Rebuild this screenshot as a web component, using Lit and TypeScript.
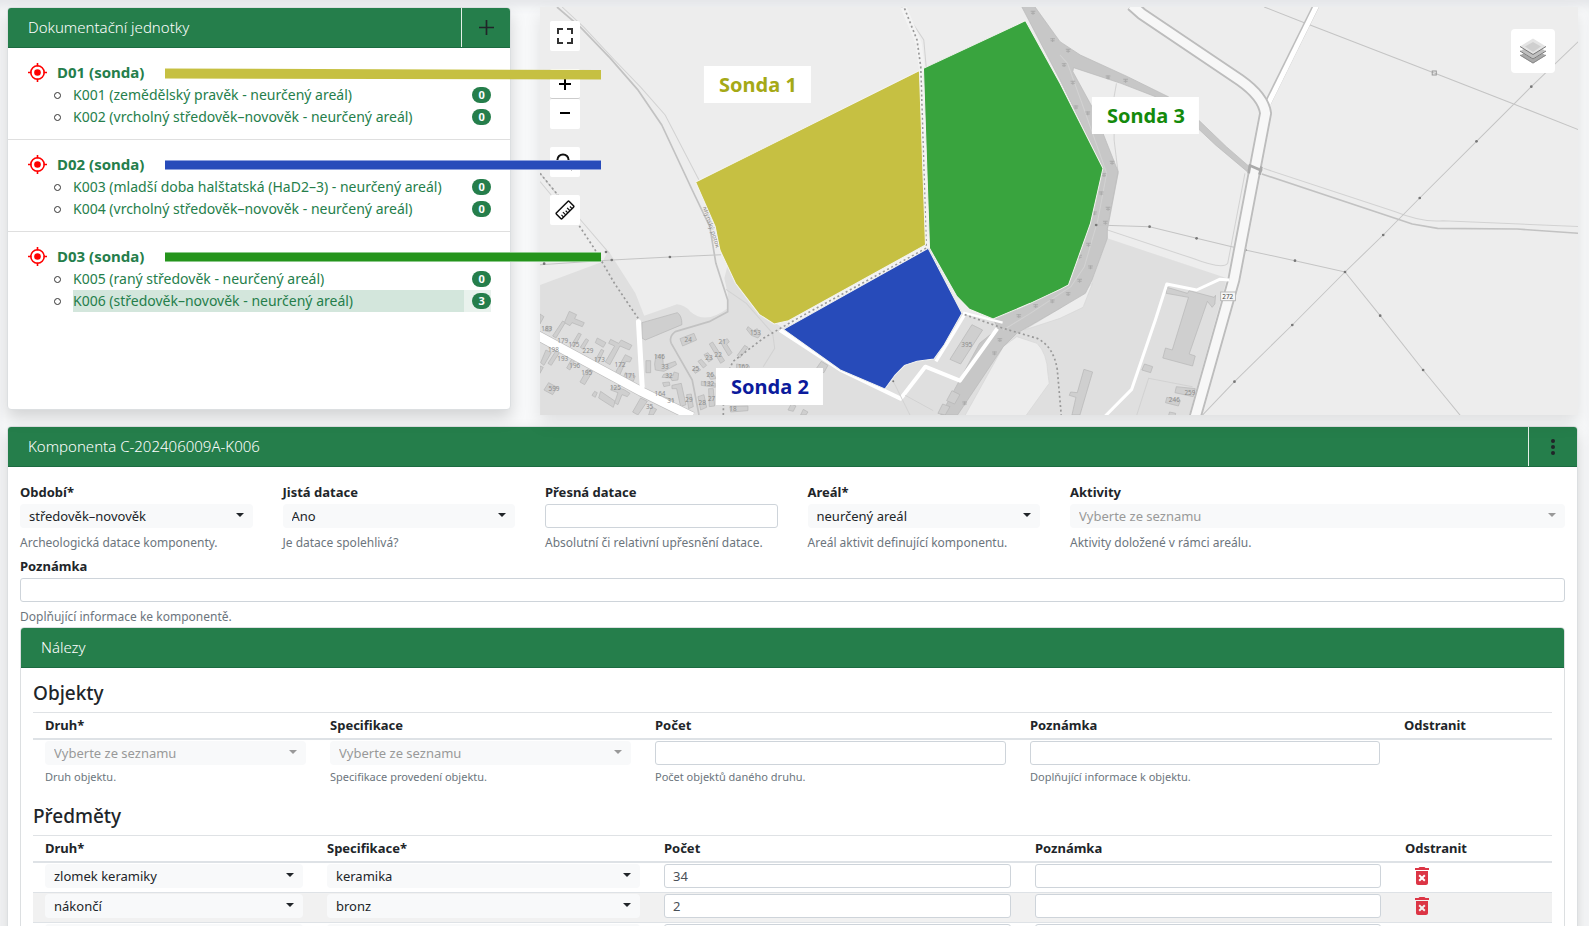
import { LitElement, html, svg, css, nothing } from "lit";
import { customElement, property } from "lit/decorators.js";
import { classMap } from "lit/directives/class-map.js";

const fontFamily = css`"Noto Sans", "Open Sans", sans-serif`;

interface Component {
  label: string;
  count: number;
  active?: boolean;
}

interface Unit {
  label: string;
  components: Component[];
}

const UNITS: Unit[] = [
  {
    label: "D01 (sonda)",
    components: [
      { label: "K001 (zemědělský pravěk - neurčený areál)", count: 0 },
      { label: "K002 (vrcholný středověk–novověk - neurčený areál)", count: 0 },
    ],
  },
  {
    label: "D02 (sonda)",
    components: [
      { label: "K003 (mladší doba halštatská (HaD2–3) - neurčený areál)", count: 0 },
      { label: "K004 (vrcholný středověk–novověk - neurčený areál)", count: 0 },
    ],
  },
  {
    label: "D03 (sonda)",
    components: [
      { label: "K005 (raný středověk - neurčený areál)", count: 0 },
      { label: "K006 (středověk–novověk - neurčený areál)", count: 3, active: true },
    ],
  },
];

interface Field {
  id: string;
  label: string;
  help: string;
  kind: "select" | "input";
  value?: string;
  span?: "wide" | "full";
}

const FIELDS: Field[] = [
  { id: "obdobi", label: "Období*", help: "Archeologická datace komponenty.", kind: "select", value: "středověk–novověk" },
  { id: "jista", label: "Jistá datace", help: "Je datace spolehlivá?", kind: "select", value: "Ano" },
  { id: "presna", label: "Přesná datace", help: "Absolutní či relativní upřesnění datace.", kind: "input" },
  { id: "areal", label: "Areál*", help: "Areál aktivit definující komponentu.", kind: "select", value: "neurčený areál" },
  { id: "aktivity", label: "Aktivity", help: "Aktivity doložené v rámci areálu.", kind: "select", span: "wide" },
  { id: "poznamka", label: "Poznámka", help: "Doplňující informace ke komponentě.", kind: "input", span: "full" },
];

const PLACEHOLDER = "Vyberte ze seznamu";

const controlStyles = css`
  * {
    box-sizing: border-box;
  }
  .select {
    position: relative;
    display: block;
  }
  .select::after {
    content: "";
    position: absolute;
    right: 9px;
    top: 9px;
    border: 4px solid transparent;
    border-top-color: #212529;
    border-bottom-width: 0;
    pointer-events: none;
  }
  .select.empty::after {
    border-top-color: #999;
  }
  .select select {
    appearance: none;
    display: block;
    width: 100%;
    height: 24px;
    padding: 0 24px 0 9px;
    border: 0;
    border-radius: 4px;
    background: #f8f9fa;
    color: #212529;
    font: 400 13px/24px ${fontFamily};
  }
  .select.empty select {
    color: #999;
  }
  .text {
    display: block;
    width: 100%;
    height: 24px;
    padding: 0 8px;
    border: 1px solid #ced4da;
    border-radius: 3px;
    background: #fff;
    color: #495057;
    font: 400 13px/22px ${fontFamily};
  }
`;

const dropdown = (value: string | undefined, id: string, labelledBy?: string) => html`
  <span class=${classMap({ select: true, empty: value === undefined })}>
    <select id=${id} aria-labelledby=${labelledBy ?? nothing}>
      <option selected>${value ?? PLACEHOLDER}</option>
    </select>
  </span>
`;

/** Grey base map with the three trench polygons. */
@customElement("site-map")
export class SiteMap extends LitElement {
  static styles = css`
    * {
      box-sizing: border-box;
    }
    :host {
      position: relative;
      display: block;
      height: 408px;
      overflow: hidden;
      background: #ededed;
      box-shadow: 0 8px 16px rgba(0, 0, 0, 0.1);
    }
    .canvas {
      display: block;
      width: 100%;
      height: 100%;
    }
    .tools {
      position: absolute;
      left: 10px;
      top: 14px;
      display: flex;
      flex-direction: column;
      gap: 18px;
    }
    .zoom {
      display: flex;
      flex-direction: column;
    }
    button {
      display: grid;
      place-items: center;
      width: 30px;
      height: 30px;
      padding: 0;
      border: 0;
      border-radius: 2px;
      background: #fff;
    }
    .zoom button:first-child {
      border-bottom: 1px solid #ccc;
    }
    .layers {
      position: absolute;
      right: 23px;
      top: 22px;
      width: 44px;
      height: 44px;
      border-radius: 4px;
    }
    .residential { fill: #dfdfdf; }
    .meadow { fill: #ededed; stroke: #d6d6d6; stroke-width: 2; }
    .forest { fill: #c7c7c7; stroke: #b9b9b9; stroke-width: 2; }
    .building { fill: #cfcfcf; stroke: #b5b5b5; stroke-width: 2; }
    .court { fill: #c9c9c9; }
    .street { fill: none; stroke: #fff; stroke-linejoin: round; }
    .casing { fill: none; stroke: #bdbdbd; stroke-linejoin: round; }
    .power { fill: none; stroke: #c4c4c4; stroke-width: 3; }
    .pole { fill: #777; }
    .track { fill: none; stroke: #999; stroke-width: 5; stroke-dasharray: 6 8; }
    .halo { fill: none; stroke: #f3f3f3; stroke-width: 18; stroke-linejoin: round; }
    .thin { fill: none; stroke: #d2d2d2; stroke-width: 3; }
    .stream { fill: none; stroke: #c2c2c2; stroke-width: 5; stroke-linejoin: round; }
    .tree { fill: none; stroke: #aaa; stroke-width: 3; }
    .number { font: 400 19px ${fontFamily}; fill: #8c8c8c; }
    .trench { stroke: #f4f4f0; stroke-width: 3; }
    .t1 { fill: #c6c042; }
    .t2 { fill: #274bba; }
    .t3 { fill: #39a43e; }
    .plate { fill: #fff; }
    .caption { font: 700 20px ${fontFamily}; text-anchor: middle; }
    .c1 { fill: #a5a916; }
    .c2 { fill: #0b1b9c; }
    .c3 { fill: #148a0b; }
  `;

  private number(x: number, y: number, text: string) {
    return svg`<text class="number" x=${x} y=${y}>${text}</text>`;
  }

  private base() {
    const west = [
      "M88 64 110 74 104 86 133 98 127 110 96 98 90 107 73 98Z", "M68 93 76 98 48 144 38 138Z", "M0 72 12 80 0 102Z",
      "M116 129 124 133 104 170 94 166Z", "M138 146 146 151 130 178 121 172Z", "M172 144 198 158 190 172 166 158Z",
      "M212 148 236 160 244 150 276 166 268 180 240 168 210 224 196 216 224 168 206 160Z",
      "M256 194 276 204 270 216 258 214 236 262 222 256Z", "M184 178 192 182 172 224 162 218Z",
      "M20 108 36 112 30 126 14 122Z", "M18 180 34 188 12 226 2 218Z", "M52 176 62 182 34 226 24 220Z",
      "M98 202 106 208 90 240 80 234Z", "M142 238 158 244 134 284 120 276Z", "M26 278 52 292 38 314 12 300Z",
      "M0 228 10 232 0 250Z", "M164 304 172 308 166 322 156 316Z", "M182 304 226 334 220 352 176 324Z",
      "M216 290 244 296 254 300 270 310 262 320 246 314 234 344 224 338 234 308 212 300Z",
      "M256 248 286 258 280 274 250 264Z", "M302 324 322 334 294 375 278 366Z", "M334 350 350 358 340 375 326 375Z",
      "M318 212 332 212 332 248 318 248Z", "M348 196 368 194 370 226 406 214 410 224 372 244 346 240 344 222Z",
      "M372 252 400 256 402 246 416 250 414 270 396 272 392 264 366 262Z", "M368 278 388 276 390 286 372 290Z",
      "M396 286 424 280 438 344 422 350 410 296 396 296Z", "M346 312 402 330 398 342 346 324Z",
      "M440 314 454 312 460 350 446 356Z", "M474 320 492 314 500 352 482 360Z", "M506 296 520 296 524 348 508 350Z",
      "M420 146 462 130 470 150 428 168Z", "M458 238 472 230 482 240 466 250Z", "M474 214 484 208 500 226 490 234Z",
      "M492 194 504 188 518 208 506 216Z", "M508 162 518 156 554 212 542 220Z",
      "M542 156 562 146 568 156 560 162 576 188 566 198 548 168Z", "M614 166 624 172 600 204 592 196Z",
      "M624 110 640 122 652 116 662 134 654 144 634 136 620 118Z", "M484 274 526 280 526 292 484 286Z",
      "M500 250 524 256 528 266 512 268Z", "M590 222 628 228 628 242 590 240Z", "M570 350 624 348 624 362 572 366Z",
      "M306 98 412 68 Q426 76 426 104 L316 150 306 144Z",
    ];
    const numbers: [number, number, string][] = [
      [4, 122, "183"], [52, 158, "179"], [86, 170, "175"], [128, 190, "229"], [24, 186, "198"], [52, 212, "193"],
      [88, 234, "196"], [162, 216, "173"], [224, 230, "172"], [124, 254, "195"], [254, 264, "171"], [26, 304, "599"],
      [210, 300, "125"], [342, 208, "146"], [364, 238, "33"], [376, 264, "32"], [344, 318, "164"], [382, 338, "31"],
      [318, 356, "35"], [436, 336, "29"], [476, 344, "28"], [504, 334, "27"], [434, 156, "24"], [456, 244, "25"],
      [496, 210, "23"], [524, 202, "22"], [536, 162, "21"], [630, 136, "153"], [490, 288, "132"], [500, 262, "26"],
      [568, 362, "18"], [594, 238, "162"],
    ];
    const poles: [number, number][] = [
      [42, 791], [242, 780], [414, 771], [225, 756], [1675, 675], [1833, 680], [1972, 715], [2116, 750], [2263, 782],
      [2411, 816], [2524, 705], [2632, 594], [2800, 424], [2962, 260], [2255, 975], [2084, 1145], [2515, 947], [2642, 1110],
    ];
    const trees: [number, number][] = [
      [1488, 38], [1546, 120], [1592, 152], [1580, 195], [1606, 248], [1615, 322], [1650, 340], [1710, 232], [1762, 242],
      [1722, 488], [1698, 525], [1690, 580], [1710, 626], [1670, 640], [1702, 668], [1652, 734], [1626, 770], [1658, 802],
      [1626, 842], [1592, 882], [1545, 904], [1496, 918], [1446, 948], [1390, 1020], [1374, 1060], [1286, 1210],
    ];
    return svg`
      <g transform="translate(530 0) scale(.33806 .33333)">
        <path class="residential" d="M30 855 215 785 232 752 312 880 338 947 435 913Q458 915 475 935 520 975 585 925L585 880 575 835 585 795 680 940 750 985 1180 745 1280 940 1390 960 1568 900 1636 922 1708 715 2062 835 1950 1245 30 1245Z"/>
        <path class="meadow" d="M1400 1040 1440 1010 1500 1030Q1530 1060 1532 1120L1536 1150 1465 1250 1285 1250Z"/>
        <path class="meadow" d="M1462 990 1568 925 1630 880 1664 850 1636 922 1568 955Z"/>
        <path class="thin" d="M30 545 75 600M95 21 160 82 250 180 328 262 400 345 500 540M1100 21 1165 120 1172 200M1735 250 1728 290 1728 420 1740 520 1708 690 1960 775Q2050 810 2064 790L2115 520M2170 505 2560 635Q2640 668 2700 662L3104 680M30 520 85 590 150 660 235 760M1795 1245 1830 1135 1960 1160"/>
        <path class="stream" d="M80 21 150 82 238 175 318 268 390 375 480 570 532 680 550 790 585 900 585 935 530 965 430 995Q410 1010 418 1030L480 1140 500 1245"/>
        <path class="thin" d="M580 868 640 910 718 1000 724 1045 690 1100"/>
        <path class="forest" d="M1452 15 1490 15 1568 125 1628 165 1768 230 1888 290 1980 362 2060 440 2128 500 2122 515 2028 435 1960 370 1850 290 1748 250 1608 203 1606 215 1668 330 1740 515 1708 685 1708 715 1663 840 1643 880 1568 925 1440 1000 1400 1040 1265 1245 1215 1245 1330 1030 1385 985 1370 957 1568 870 1593 855 1658 670 1695 505 1568 240Z"/>
        <path class="thin" d="M1568 165 1590 190 1640 330 1706 520 1680 660 1640 800 1600 860 1480 940 1400 990"/>
        ${trees.map(([x, y]) => svg`<path class="tree" d=${`M${x - 7} ${y - 4}h14M${x - 6} ${y + 2}h12M${x} ${y - 6}v12`}/>`)}
        <g transform="translate(29.6 870) scale(.986 1)">
          ${west.map((d) => svg`<path class="building" d=${d}/>`)}
        </g>
        <g transform="translate(739.5 870) scale(.986 1)">
          <path class="street" stroke-width="12" d="M0 120 180 238 362 326 436 230 540 272 652 116"/>
          <path class="street" stroke-width="10" d="M556 70 520 130 468 214"/>
          <path class="street" stroke-width="7" d="M550 68 668 98"/>
          <path class="building" d="M576 104 608 120 542 222 510 208Z"/>
          <path class="building" d="M124 214 144 226 132 248 106 240Z M34 342 48 348 40 364 24 360Z M70 358 84 366 78 375 62 375Z"/>
          <path class="building" d="M516 302 540 314 524 342 500 332Z M488 342 510 350 496 375 474 370Z"/>
          <path class="building" d="M912 238 938 246 900 375 876 375 888 322 868 316 872 306 892 308Z"/>
          <path class="thin" d="M340 274 390 375M376 316 460 362"/>
          <circle class="pole" cx="340" cy="274" r="3"/>
        </g>
        <path class="casing" stroke-width="30" d="M20 1005 330 1175 480 1250"/>
        <path class="street" stroke-width="26" d="M20 1005 330 1175 480 1250"/>
        <path class="street" stroke-width="15" stroke-linecap="round" d="M321 965 332 1160"/>
        <g transform="translate(29.6 870) scale(.986 1)">
          ${numbers.map(([x, y, t]) => this.number(x, y, t))}
        </g>
        ${this.number(1276, 1041, "395")}

        <path class="building" d="M1884 862 1945 880 1950 872 2024 892 2028 886 2026 912 2018 922 2004 904 1950 1062 1968 1068 1960 1098 1872 1074 1880 1044 1900 1050 1948 892 1882 880Z"/>
        <path class="building" d="M1818 1092 1842 1100 1836 1118 1810 1110Z M1912 1160 1968 1166 1962 1190 1908 1178Z M1884 1192 1924 1202 1918 1218 1880 1208Z M1892 1236 1910 1240 1908 1250 1888 1250Z"/>
        ${this.number(1936, 1186, "259")}${this.number(1890, 1206, "246")}

        <path class="power" d="M30 794 242 780 414 771 565 764M1675 675 1833 680 1972 715 2116 750 2263 782 2411 816 2524 705 2632 594 2800 424 2962 260 3104 122M2411 816 2255 975 2084 1145 1985 1250M2411 816 2515 947 2642 1110 2755 1250M2172 21 2300 72 2675 219 2912 313 3104 390"/>
        ${poles.map(([x, y]) => svg`<circle class="pole" cx=${x} cy=${y} r="4"/>`)}
        <rect x="2669" y="213" width="12" height="12" fill="none" stroke="#999" stroke-width="3"/>

        <path class="stream" d="M2165 522 2610 672 2685 685 2920 687 3104 700"/>
        <path class="casing" stroke-width="20" d="M2326 15 2182 310"/>
        <path class="street" stroke-width="15" d="M2328 15 2182 315"/>
        <path class="casing" stroke-width="38" d="M1780 15 1810 42 2100 240Q2170 290 2176 340L2082 840 1968 1250"/>
        <path class="casing" stroke-width="34" d="M1780 15 1810 42 2100 240Q2170 290 2176 340L2082 840 1968 1250"/>
        <path fill="none" stroke="#f7f7f7" stroke-width="27" d="M1780 15 1810 42 2100 240Q2170 290 2176 340L2082 840 1968 1250"/>
        <path class="street" stroke-width="9" d="M2068 840 2040 838 1972 870 1884 852 1850 960 1780 1168 1700 1250"/>
        <path d="M2126 495 2166 512M2126 520l4-26M2158 524l6-24" stroke="#aaa" stroke-width="8"/>
        <rect x="2043" y="876" width="44" height="26" fill="#f7f7f7" stroke="#bbb" stroke-width="3"/>
        <text class="number" x="2048" y="896" style="fill:#444">272</text>

        <path class="halo" d="M1105 21 1150 130 1160 210 1172 740 765 975"/>
        <path class="track" d="M1108 25 1145 120 1156 200 1172 740M1180 750 1275 940 1400 985 1500 1015Q1550 1040 1560 1110L1572 1250"/>
        <path class="track" d="M30 520 95 600 190 745 250 850 320 955"/>
        <path class="track" d="M1172 745 780 962 690 1015 600 1085 573 1150 572 1245"/>
        <text class="number" transform="translate(511 622) rotate(72)">Mlýnský potok</text>

        <path class="trench t1" d="M490 546 1152 212 1170 735 765 962 722 972 678 943 608 850 562 750 548 680Z"/>
        <path class="trench t3" d="M1164 205 1466 62 1568 250 1695 505 1658 670 1593 855 1568 868 1480 910 1370 957 1300 928 1262 888 1182 745Z"/>
        <path class="trench t2" d="M750 988 1178 745 1278 940 1225 1035 1195 1077 1145 1084 1108 1096 1080 1125 1050 1167 918 1110Z"/>
      </g>
      <rect class="plate" x="704" y="66" width="107" height="37"/>
      <text class="caption c1" x="758" y="92">Sonda 1</text>
      <rect class="plate" x="716" y="368" width="107" height="37"/>
      <text class="caption c2" x="770" y="394">Sonda 2</text>
      <rect class="plate" x="1092" y="97" width="107" height="37"/>
      <text class="caption c3" x="1146" y="123">Sonda 3</text>
    `;
  }

  render() {
    return html`
      <svg class="canvas" viewBox="540 7 1038 408" preserveAspectRatio="xMidYMid slice" role="img" aria-label="Mapa">
        ${this.base()}
      </svg>
      <div class="tools">
        <button type="button" aria-label="Celá obrazovka">
          <svg width="16" height="16" viewBox="0 0 16 16" fill="none" stroke="#333" stroke-width="2">
            <path d="M1 6V1h5M10 1h5v5M15 10v5h-5M6 15H1v-5" />
          </svg>
        </button>
        <div class="zoom">
          <button type="button" aria-label="Přiblížit">
            <svg width="14" height="14" viewBox="0 0 14 14" stroke="#000" stroke-width="2"><path d="M1 7h12M7 2v11" /></svg>
          </button>
          <button type="button" aria-label="Oddálit">
            <svg width="14" height="14" viewBox="0 0 14 14" stroke="#000" stroke-width="2"><path d="M2 6h10" /></svg>
          </button>
        </div>
        <button type="button" aria-label="Hledat">
          <svg width="18" height="18" viewBox="0 0 18 18" fill="none" stroke="#111" stroke-width="2">
            <circle cx="7" cy="7" r="5.6" /><path d="M11 11l5.500 5.500" stroke-width="3" />
          </svg>
        </button>
        <button type="button" aria-label="Měření">
          <svg width="20" height="20" viewBox="0 0 20 20" fill="none" stroke="#111" stroke-width="1.500">
            <g transform="rotate(-45 10 10)">
              <rect x="1" y="6" width="18" height="8" rx="1" />
              <path d="M4 14v-3M7 14v-4M10 14v-3M13 14v-4M16 14v-3" stroke-width="1.200" />
            </g>
          </svg>
        </button>
      </div>
      <button class="layers" type="button" aria-label="Vrstvy">
        <svg width="26" height="26" viewBox="0 0 26 26">
          <path d="M0 17.500 13 25.500 26 17.500 13 9.500Z" fill="#a9a9a9" />
          <path d="M0 17 13 25 26 17" fill="none" stroke="#8a8a8a" />
          <path d="M0 13 13 21 26 13 13 5Z" fill="#c0c0c0" stroke="#fff" stroke-width=".500" />
          <path d="M0 13 13 21 26 13" fill="none" stroke="#777" />
          <path d="M0 8.500 13 16.500 26 8.500 13 .500Z" fill="#e4e4e4" />
          <path d="M5 8.500 13 4 21 8.500 13 14Z" fill="#cfcfcf" />
          <path d="M0 8.500 13 16.500 26 8.500" fill="none" stroke="#777" />
        </svg>
      </button>
    `;
  }
}

/** Card with a green title bar and an optional action on its right. */
@customElement("green-card")
export class GreenCard extends LitElement {
  @property() heading = "";
  @property({ type: Boolean }) flat = false;

  static styles = css`
    * {
      box-sizing: border-box;
    }
    :host {
      display: block;
      border: 1px solid #dcdfe1;
      border-radius: 4px;
      background: #fff;
      box-shadow: 0 8px 16px rgba(0, 0, 0, 0.15);
    }
    :host([flat]) {
      box-shadow: none;
    }
    .bar {
      display: flex;
      height: 40px;
      border-bottom: 1px solid #1c6b41;
      border-radius: 3px 3px 0 0;
      background: #257e4b;
      color: #fff;
    }
    .title {
      flex: 1;
      margin: 0;
      padding-left: 20px;
      font: 300 15px/38px ${fontFamily};
    }
  `;

  render() {
    return html`
      <header class="bar">
        <h2 class="title">${this.heading}</h2>
        <slot name="action"></slot>
      </header>
      <slot></slot>
    `;
  }
}

/** List of documentation units and their components. */
@customElement("unit-list")
export class UnitList extends LitElement {
  static styles = css`
    * {
      box-sizing: border-box;
    }
    :host {
      display: block;
      font-family: ${fontFamily};
    }
    ul {
      margin: 0;
      padding: 0;
      list-style: none;
    }
    .unit {
      padding: 12px 19px 11px 20px;
      border-bottom: 1px solid #dfdfdf;
    }
    .unit:last-child {
      border-bottom: 0;
    }
    a {
      color: #257e4b;
      text-decoration: none;
    }
    .head {
      display: flex;
      align-items: center;
      gap: 10px;
      height: 24px;
      font-size: 15px;
      font-weight: 700;
    }
    .rows {
      padding-left: 26px;
    }
    .row {
      display: flex;
      align-items: center;
      height: 22px;
    }
    .bullet {
      width: 7px;
      height: 7px;
      margin-right: 12px;
      border: 1px solid #333;
      border-radius: 50%;
    }
    .link {
      flex: 1;
      font-size: 14px;
      line-height: 22px;
      white-space: nowrap;
    }
    .count {
      display: flex;
      justify-content: flex-end;
      align-items: center;
      width: 27px;
      height: 22px;
    }
    .badge {
      width: 19px;
      height: 16px;
      border-radius: 8px;
      background: #257e4b;
      color: #fff;
      font-size: 11px;
      font-weight: 700;
      line-height: 16px;
      text-align: center;
    }
    .active .link {
      background: #d3e6dc;
    }
    .active .count {
      background: #e9f2ed;
    }
  `;

  render() {
    return html`
      <ul>
        ${UNITS.map(
          (unit) => html`
            <li class="unit">
              <a class="head" href="#">
                <svg width="19" height="19" viewBox="0 0 19 19" fill="none" stroke="#f00" stroke-width="1.600">
                  <circle cx="9.500" cy="9.500" r="6.700" />
                  <path d="M9.500 0v3.500M9.500 15.500V19M0 9.500h3.500M15.500 9.500H19" />
                  <circle cx="9.500" cy="9.500" r="3.300" fill="#f00" stroke="none" />
                </svg>
                ${unit.label}
              </a>
              <ul class="rows">
                ${unit.components.map(
                  (c) => html`
                    <li class=${classMap({ row: true, active: !!c.active })}>
                      <span class="bullet"></span>
                      <a class="link" href="#">${c.label}</a>
                      <span class="count"><span class="badge">${c.count}</span></span>
                    </li>
                  `,
                )}
              </ul>
            </li>
          `,
        )}
      </ul>
    `;
  }
}

interface Find {
  kind?: string;
  spec?: string;
  count: string;
  removable?: boolean;
}

/** Table of finds with an editable line for each of them. */
@customElement("finds-table")
export class FindsTable extends LitElement {
  @property() heading = "";
  @property() name = "";
  @property({ attribute: false }) columns: string[] = [];
  @property({ attribute: false }) widths: number[] = [];
  @property({ attribute: false }) hints: string[] = [];
  @property({ attribute: false }) rows: Find[] = [];

  static styles = [
    controlStyles,
    css`
      :host {
        display: block;
        font-family: ${fontFamily};
        color: #212529;
      }
      .caption {
        margin: 0 0 6px;
        font-size: 19px;
        font-weight: 500;
        line-height: 26px;
      }
      table {
        width: 100%;
        border-spacing: 0;
        table-layout: fixed;
        border-top: 1px solid #dfe2e5;
      }
      th {
        height: 27px;
        padding: 0 12px;
        border-bottom: 2px solid #dee2e6;
        font-size: 13px;
        font-weight: 700;
        line-height: 25px;
        text-align: left;
      }
      td {
        padding: 1px 12px 4px;
        vertical-align: top;
      }
      .ruled td {
        border-bottom: 1px solid #dee2e6;
      }
      .ruled tr:nth-child(even) td {
        background: #f1f1f1;
      }
      .hint {
        margin: 4px 0 0;
        color: #6c757d;
        font-size: 11px;
        line-height: 16px;
      }
      .remove {
        display: block;
        height: 24px;
        margin-left: 5px;
        padding: 0;
        border: 0;
        background: none;
        color: #dc3545;
      }
      .remove svg {
        display: block;
      }
    `,
  ];

  render() {
    const head = (i: number) => `${this.name}-${i}`;
    const total = this.widths.reduce((a, b) => a + b, 0);
    const hint = (i: number) => (this.hints[i] ? html`<p class="hint">${this.hints[i]}</p>` : nothing);
    return html`
      <h3 class="caption">${this.heading}</h3>
      <table>
        <colgroup>
          ${this.widths.map((w) => html`<col style="width:${(w / total) * 100}%" />`)}
        </colgroup>
        <thead>
          <tr>
            ${this.columns.map((c, i) => html`<th scope="col" id=${head(i)}>${c}</th>`)}
          </tr>
        </thead>
        <tbody class=${classMap({ ruled: this.hints.length === 0 })}>
          ${this.rows.map(
            (row, r) => html`
              <tr>
                <td>${dropdown(row.kind, `${this.name}-kind-${r}`, head(0))}${hint(0)}</td>
                <td>${dropdown(row.spec, `${this.name}-spec-${r}`, head(1))}${hint(1)}</td>
                <td><input class="text" aria-labelledby=${head(2)} .value=${row.count} />${hint(2)}</td>
                <td><input class="text" aria-labelledby=${head(3)} />${hint(3)}</td>
                <td>
                  ${row.removable
                    ? html`<button class="remove" type="button" aria-label="Odstranit">
                        <svg width="24" height="24" viewBox="0 0 24 24" fill="currentColor">
                          <path
                            d="M6 19c0 1.100.9 2 2 2h8c1.100 0 2-.9 2-2V7H6v12zm2.460-7.120 1.410-1.410L12 12.590l2.120-2.120 1.410 1.410L13.410 14l2.120 2.120-1.410 1.410L12 15.410l-2.120 2.120-1.410-1.410L10.590 14l-2.130-2.120zM15.500 4l-1-1h-5l-1 1H5v2h14V4z"
                          />
                        </svg>
                      </button>`
                    : nothing}
                </td>
              </tr>
            `,
          )}
        </tbody>
      </table>
    `;
  }
}

@customElement("app-root")
export class AppRoot extends LitElement {
  static styles = [
    controlStyles,
    css`
      :host {
        position: relative;
        display: block;
        height: 100vh;
        overflow: hidden;
        padding: 7px 11px 0 7px;
        background: #f8f9fa;
        box-shadow: inset 0 10px 10px -4px #e4e6e9;
        font-family: ${fontFamily};
        color: #212529;
      }
      .top {
        display: grid;
        grid-template-columns: minmax(0, 34fr) minmax(0, 70fr);
        gap: 29px;
        margin-bottom: 11px;
      }
      .units {
        margin-bottom: 5px;
      }
      .links {
        position: absolute;
        left: 165px;
        top: 62px;
        width: 436px;
        height: 206px;
        pointer-events: none;
      }
      .action {
        display: grid;
        place-items: center;
        width: 49px;
        height: 39px;
        padding: 0;
        border: 0;
        border-left: 1px solid #e6efe9;
        background: none;
        color: #212529;
      }
      .form {
        padding: 15px 12px 12px;
      }
      .fields {
        display: grid;
        grid-template-columns: repeat(6, minmax(0, 1fr));
        column-gap: 30px;
        row-gap: 4px;
        margin-bottom: 1px;
      }
      .wide {
        grid-column: span 2;
      }
      .full {
        grid-column: 1 / -1;
      }
      label {
        display: block;
        margin-bottom: 2px;
        font-size: 13px;
        font-weight: 700;
        line-height: 20px;
      }
      .help {
        margin: 6px 0 0;
        color: #6c757d;
        font-size: 12px;
        line-height: 18px;
      }
      .finds {
        display: grid;
        gap: 14px;
        padding: 12px;
      }
    `,
  ];

  private field(f: Field) {
    return html`
      <div class=${classMap({ wide: f.span === "wide", full: f.span === "full" })}>
        <label for=${f.id}>${f.label}</label>
        ${f.kind === "select" ? dropdown(f.value, f.id) : html`<input class="text" id=${f.id} />`}
        <p class="help">${f.help}</p>
      </div>
    `;
  }

  render() {
    return html`
      <section class="top">
        <green-card class="units" heading="Dokumentační jednotky">
          <button class="action" slot="action" type="button" aria-label="Přidat">
            <svg width="15" height="15" viewBox="0 0 15 15" stroke="currentColor" stroke-width="1.700">
              <path d="M0 7.500h15M7.500 0v15" />
            </svg>
          </button>
          <unit-list></unit-list>
        </green-card>
        <site-map></site-map>
      </section>

      <svg class="links" viewBox="165 62 436 206">
        <path d="M165 68.500 601 70V79.500L165 78.500Z" fill="#c6c042" />
        <path d="M165 160.500H601M165 169.500H601" stroke="#8ea1dd" />
        <path d="M165 161H601V169H165Z" fill="#274bba" />
        <path d="M165 252.500H601M165 261.500H601" stroke="#8bc98a" />
        <path d="M165 253H601V261H165Z" fill="#25941c" />
      </svg>

      <green-card heading="Komponenta C-202406009A-K006">
        <button class="action" slot="action" type="button" aria-label="Další akce">
          <svg width="16" height="18" viewBox="0 0 16 18" fill="currentColor">
            <circle cx="8" cy="3" r="2" /><circle cx="8" cy="9" r="2" /><circle cx="8" cy="15" r="2" />
          </svg>
        </button>
        <div class="form">
          <div class="fields">${FIELDS.map((f) => this.field(f))}</div>
          <green-card flat heading="Nálezy">
            <div class="finds">
              <finds-table
                heading="Objekty"
                name="objekty"
                .columns=${["Druh*", "Specifikace", "Počet", "Poznámka", "Odstranit"]}
                .widths=${[285, 325, 375, 374, 160]}
                .hints=${[
                  "Druh objektu.",
                  "Specifikace provedení objektu.",
                  "Počet objektů daného druhu.",
                  "Doplňující informace k objektu.",
                ]}
                .rows=${[{ count: "" }]}
              ></finds-table>
              <finds-table
                heading="Předměty"
                name="predmety"
                .columns=${["Druh*", "Specifikace*", "Počet", "Poznámka", "Odstranit"]}
                .widths=${[282, 337, 371, 370, 159]}
                .rows=${[
                  { kind: "zlomek keramiky", spec: "keramika", count: "34", removable: true },
                  { kind: "nákončí", spec: "bronz", count: "2", removable: true },
                  { kind: "", spec: "", count: "" },
                ]}
              ></finds-table>
            </div>
          </green-card>
        </div>
      </green-card>
    `;
  }
}
